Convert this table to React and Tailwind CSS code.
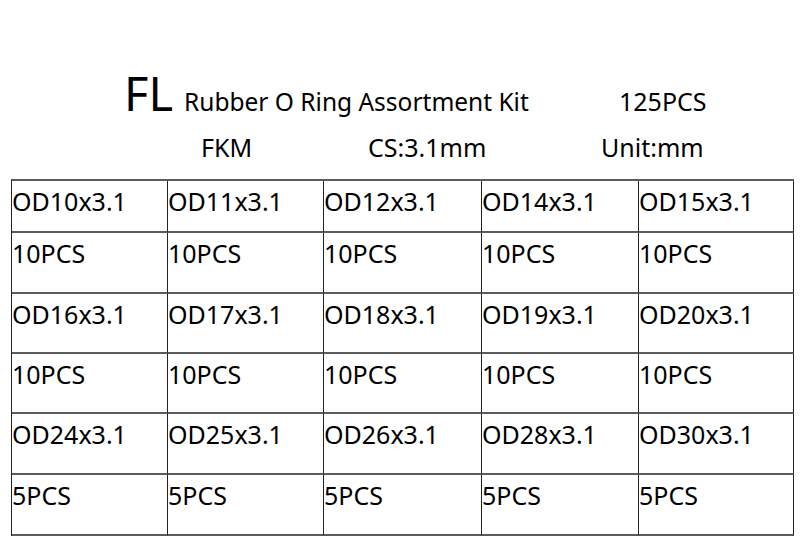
const rows = [
  { h: 'h-[52px]', cells: ['OD10x3.1', 'OD11x3.1', 'OD12x3.1', 'OD14x3.1', 'OD15x3.1'] },
  { h: 'h-[61px]', cells: ['10PCS', '10PCS', '10PCS', '10PCS', '10PCS'] },
  { h: 'h-[60px]', cells: ['OD16x3.1', 'OD17x3.1', 'OD18x3.1', 'OD19x3.1', 'OD20x3.1'] },
  { h: 'h-[60px]', cells: ['10PCS', '10PCS', '10PCS', '10PCS', '10PCS'] },
  { h: 'h-[61px]', cells: ['OD24x3.1', 'OD25x3.1', 'OD26x3.1', 'OD28x3.1', 'OD30x3.1'] },
  { h: 'h-[61px]', cells: ['5PCS', '5PCS', '5PCS', '5PCS', '5PCS'] },
];

const colWidths = ['w-[156px]', 'w-[156px]', 'w-[158px]', 'w-[157px]', 'w-[155px]'];

export default function App() {
  return (
    <div className="w-[800px] h-[544px] bg-white text-black font-['Noto_Sans',sans-serif] overflow-hidden">
      {/* heading */}
      <div className="pt-[70px] pl-[124px] flex items-baseline h-[117px]">
        <span className="w-[60px] text-[47px] leading-[47px]">FL</span>
        <span className="w-[435px] text-[24.5px] leading-[30px]">Rubber O Ring Assortment Kit</span>
        <span className="text-[25px] leading-[30px]">125PCS</span>
      </div>
      <div className="mt-[15px] pl-[201px] flex items-baseline h-[30px] text-[25px] leading-[30px]">
        <span className="w-[167px]">FKM</span>
        <span className="w-[233px]">CS:3.1mm</span>
        <span>Unit:mm</span>
      </div>

      {/* size table */}
      <div className="mt-[17px] ml-[11px] w-[783px] border-l border-l-[#222] border-t-2 border-t-[#5c5c5c]">
        {rows.map((row, i) => (
          <div key={i} className={`flex ${row.h}`}>
            {row.cells.map((c, j) => (
              <div
                key={j}
                className={`${colWidths[j]} h-full border-r border-r-[#222] border-b-2 border-b-[#5c5c5c] pt-[5px] text-[25px] leading-[30px]`}
              >
                {c}
              </div>
            ))}
          </div>
        ))}
      </div>
    </div>
  );
}
